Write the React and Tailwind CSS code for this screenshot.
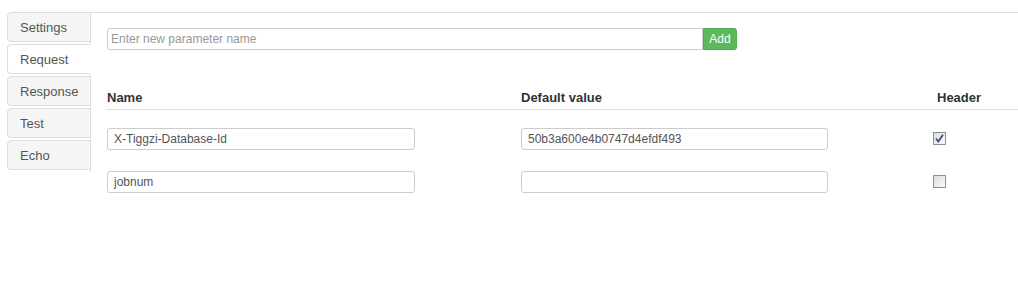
import { useState } from 'react';

const tabs = ['Settings', 'Request', 'Response', 'Test', 'Echo'];

const params = [
  { id: 1, name: 'X-Tiggzi-Database-Id', value: '50b3a600e4b0747d4efdf493', header: true },
  { id: 2, name: 'jobnum', value: '', header: false },
];

const CheckBox = ({ checked, onChange }) => (
  <button
    type="button"
    onClick={onChange}
    className="w-[13px] h-[13px] border border-[#8e8f8f] bg-gradient-to-br from-[#dcdcdc] to-[#fbfbfb] flex items-center justify-center p-0"
  >
    {checked && (
      <svg width="11" height="11" viewBox="0 0 11 11">
        <path d="M2 5.5 L4.3 8.5 L9 1.8" fill="none" stroke="#3c4d8c" strokeWidth="1.8" />
      </svg>
    )}
  </button>
);

const App = () => {
  const [active, setActive] = useState('Request');
  const [rows, setRows] = useState(params);
  const [newName, setNewName] = useState('');

  // update one field of a row
  const setField = (id, field, val) => {
    setRows(rows.map(r => (r.id === id ? { ...r, [field]: val } : r)));
  };

  const handleAdd = () => {
    if (!newName.trim()) return;
    setRows([...rows, { id: Date.now(), name: newName, value: '', header: false }]);
    setNewName('');
  };

  return (
    <div className="flex items-start pt-[12px] pl-[7px] h-[307px] bg-white text-[13px] font-['Liberation_Sans',Arial,sans-serif]">
      <ul className="w-[84px] border-r border-[#ddd]">
        {tabs.map(tab => (
          <li
            key={tab}
            onClick={() => setActive(tab)}
            className={`-mr-px mb-[2px] h-[30px] border border-[#ddd] rounded-l-[4px] pl-[12px] pt-[1px] leading-[27px] text-[#555] cursor-pointer ${
              active === tab ? 'bg-white border-r-white' : 'bg-[#f5f5f5]'
            }`}
          >
            {tab}
          </li>
        ))}
      </ul>

      <div className="flex-1 border-t border-[#ddd] pt-[15px] pl-[16px]">
        <div className="flex">
          <input
            value={newName}
            onChange={e => setNewName(e.target.value)}
            placeholder="Enter new parameter name"
            className="w-[596px] h-[22px] border border-[#ccc] rounded-l-[3px] px-[3px] text-[12px] text-[#555] placeholder:text-[#999] outline-none"
          />
          <button
            type="button"
            onClick={handleAdd}
            className="w-[34px] h-[22px] bg-[#5cb85c] border border-[#4cae4c] rounded-r-[3px] text-white text-[12px] leading-[20px]"
          >
            Add
          </button>
        </div>

        <div className="mt-[38px] -ml-px pl-px pb-[1px] border-b border-[#ddd] grid grid-cols-[414px_416px_1fr] font-bold text-[#333] leading-[20px]">
          <div>Name</div>
          <div>Default value</div>
          <div>Header</div>
        </div>

        <div className="mt-[18px] flex flex-col gap-[21px]">
          {rows.map(row => (
            <div key={row.id} className="grid grid-cols-[414px_416px_1fr] items-start">
              <input
                value={row.name}
                onChange={e => setField(row.id, 'name', e.target.value)}
                className="w-[308px] h-[22px] border border-[#ccc] rounded-[3px] px-[6px] text-[12px] text-[#555] outline-none"
              />
              <input
                value={row.value}
                onChange={e => setField(row.id, 'value', e.target.value)}
                className="w-[307px] h-[22px] border border-[#ccc] rounded-[3px] px-[6px] text-[12px] text-[#555] outline-none"
              />
              <div className="-ml-[4px] pt-[4px]">
                <CheckBox checked={row.header} onChange={() => setField(row.id, 'header', !row.header)} />
              </div>
            </div>
          ))}
        </div>
      </div>
    </div>
  );
};

export default App;
